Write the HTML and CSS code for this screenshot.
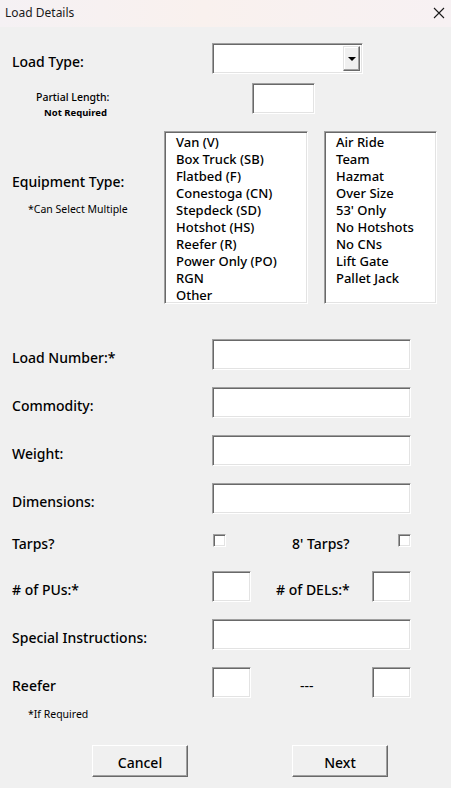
FILE: index.html
```html
<!DOCTYPE html>
<html>
<head>
<meta charset="utf-8">
<link rel="stylesheet" href="styles.css">
</head>
<body>
<div class="window">
  <div class="titlebar">
    <span class="title">Load Details</span>
    <svg class="close" width="12" height="12" viewBox="0 0 12 12"><path d="M1 1 L11 11 M11 1 L1 11" stroke="#1a1a1a" stroke-width="1.1" fill="none"/></svg>
  </div>
  <div class="form">
    <div class="row r-loadtype">
      <div class="label lbl-main">Load Type:</div>
      <div class="combo sunken">
        <div class="combo-btn"><span class="tri"></span></div>
      </div>
    </div>
    <div class="row r-partial">
      <div class="label partial-lbl">
        <div class="small pl1">Partial Length:</div>
        <div class="small bold pl2">Not Required</div>
      </div>
      <div class="box sunken partial-box"></div>
    </div>
    <div class="row r-equip">
      <div class="label equip-lbl">
        <div class="lbl-main">Equipment Type:</div>
        <div class="small note">*Can Select Multiple</div>
      </div>
      <div class="list sunken list1">
        <div>Van (V)</div>
        <div>Box Truck (SB)</div>
        <div>Flatbed (F)</div>
        <div>Conestoga (CN)</div>
        <div>Stepdeck (SD)</div>
        <div>Hotshot (HS)</div>
        <div>Reefer (R)</div>
        <div>Power Only (PO)</div>
        <div>RGN</div>
        <div>Other</div>
      </div>
      <div class="list sunken list2">
        <div>Air Ride</div>
        <div>Team</div>
        <div>Hazmat</div>
        <div>Over Size</div>
        <div>53' Only</div>
        <div>No Hotshots</div>
        <div>No CNs</div>
        <div>Lift Gate</div>
        <div>Pallet Jack</div>
      </div>
    </div>
    <div class="row r-text first">
      <div class="label lbl-main">Load Number:*</div>
      <div class="text sunken"></div>
    </div>
    <div class="row r-text">
      <div class="label lbl-main">Commodity:</div>
      <div class="text sunken"></div>
    </div>
    <div class="row r-text">
      <div class="label lbl-main">Weight:</div>
      <div class="text sunken"></div>
    </div>
    <div class="row r-text">
      <div class="label lbl-main">Dimensions:</div>
      <div class="text sunken"></div>
    </div>
    <div class="row r-tarps">
      <div class="label lbl-main">Tarps?</div>
      <div class="check sunken"></div>
      <div class="mid-lbl lbl-main tarps8">8' Tarps?</div>
      <div class="check sunken"></div>
    </div>
    <div class="row r-text r-pus">
      <div class="label lbl-main">#&nbsp;of PUs:*</div>
      <div class="short sunken"></div>
      <div class="mid-lbl lbl-main dels">#&nbsp;of DELs:*</div>
      <div class="short sunken"></div>
    </div>
    <div class="row r-text">
      <div class="label lbl-main">Special Instructions:</div>
      <div class="text sunken"></div>
    </div>
    <div class="row r-text">
      <div class="label lbl-main">Reefer</div>
      <div class="short sunken"></div>
      <div class="mid-lbl lbl-main dashes">---</div>
      <div class="short sunken"></div>
    </div>
    <div class="small note ifreq">*If Required</div>
    <div class="buttons">
      <button class="btn">Cancel</button>
      <button class="btn">Next</button>
    </div>
  </div>
</div>
</body>
</html>
```
FILE: styles.css
```css
* { box-sizing: border-box; }
html, body {
  margin: 0;
  padding: 0;
  background: #f0f0f0;
}
body {
  font-family: "Noto Sans", "Open Sans", sans-serif;
  color: #000;
  width: 451px;
  height: 788px;
  overflow: hidden;
}
.titlebar {
  height: 27px;
  background: linear-gradient(90deg, #f5f1f4 0%, #f9f1ee 45%, #f7f1f3 100%);
  display: flex;
  align-items: center;
  justify-content: space-between;
  padding: 0 6px 2px 5px;
}
.title {
  font-size: 12px;
  color: #1a1a1a;
}
.close { margin-right: 0; }
.form {
  padding-left: 12px;
  display: flex;
  flex-direction: column;
}
.row {
  display: flex;
  align-items: center;
}
.label {
  width: 200px;
  flex: none;
}
.lbl-main {
  font-size: 14px;
  font-weight: 500;
  padding-top: 6px;
}
.small {
  font-size: 10.5px;
  font-weight: 500;
}
.bold { font-weight: 700; font-size: 9.5px; }
.sunken {
  background: #fff;
  border-top: 1px solid #a0a0a0;
  border-left: 1px solid #a0a0a0;
  border-right: 1px solid #fff;
  border-bottom: 1px solid #fff;
  box-shadow: inset 1px 1px 0 #696969, inset -1px -1px 0 #e3e3e3;
}
.r-loadtype { margin-top: 16px; height: 31px; }
.combo {
  width: 151px;
  height: 31px;
  display: flex;
  justify-content: flex-end;
  padding: 2px;
}
.combo-btn {
  width: 17px;
  height: 100%;
  background: #f0f0f0;
  border-top: 1px solid #e3e3e3;
  border-left: 1px solid #e3e3e3;
  border-right: 1px solid #696969;
  border-bottom: 1px solid #696969;
  box-shadow: inset -1px -1px 0 #a0a0a0, inset 1px 1px 0 #fff;
  display: flex;
  align-items: center;
  justify-content: center;
}
.tri {
  width: 0; height: 0;
  border-left: 4px solid transparent;
  border-right: 4px solid transparent;
  border-top: 4px solid #000;
}
.r-partial { margin-top: 9px; height: 31px; }
.partial-lbl {
  padding-top: 12px;
  line-height: 15px;
}
.pl1 { padding-left: 24px; }
.pl2 { padding-left: 32px; }
.partial-box {
  width: 63px;
  height: 31px;
  margin-left: 40px;
}
.r-equip { margin-top: 17px; align-items: flex-start; height: 173px; }
.equip-lbl {
  width: 152px;
  padding-top: 36px;
}
.equip-lbl .lbl-main { line-height: 18px; }
.note { font-weight: 400; padding-left: 16px; margin-top: 11px; }
.list {
  height: 173px;
  padding: 2px 0 0 11px;
  font-size: 13px;
  font-weight: 500;
  line-height: 17px;
}
.list1 { width: 144px; }
.list2 { width: 113px; margin-left: 16px; }
.r-text { height: 31px; margin-top: 17px; }
.r-text.first { margin-top: 35px; }
.text { width: 199px; height: 31px; }
.short { width: 39px; height: 31px; }
.r-tarps { height: 18px; margin-top: 17px; }
.check {
  width: 13px;
  height: 13px;
  margin-left: 1px;
}
.mid-lbl { flex: none; }
.tarps8 { width: 105px; margin-left: 66px; }
.r-pus { margin-top: 22px; }
.dels { width: 96px; margin-left: 25px; }
.dashes { width: 72px; margin-left: 49px; font-weight: 400; }
.ifreq { margin-top: 9px; }
.buttons {
  display: flex;
  gap: 104px;
  margin-top: 24px;
  padding-left: 80px;
}
.btn {
  width: 96px;
  height: 32px;
  background: #f0f0f0;
  font-family: "Noto Sans", sans-serif;
  font-size: 14px;
  font-weight: 500;
  color: #000;
  border-top: 1px solid #fff;
  border-left: 1px solid #fff;
  border-right: 1px solid #696969;
  border-bottom: 1px solid #696969;
  box-shadow: inset -1px -1px 0 #a0a0a0;
  padding: 2px 0 0 0;
}
```
